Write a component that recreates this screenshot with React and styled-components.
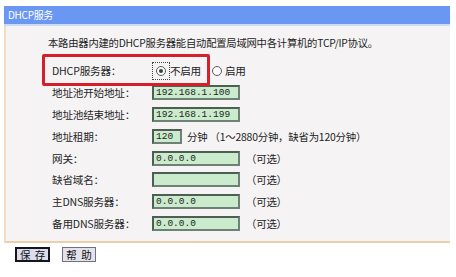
import React from 'react';
import styled, { createGlobalStyle } from 'styled-components';

const GlobalStyle = createGlobalStyle`
  body {
    margin: 0;
    background: #ffffff;
    font-family: "Noto Sans CJK SC", "Liberation Sans", sans-serif;
    color: #1e1e1e;
  }
`;

const rows = [
  { label: '地址池开始地址：', value: '192.168.1.100', width: 88 },
  { label: '地址池结束地址：', value: '192.168.1.199', width: 88 },
  { label: '地址租期：', value: '120', width: 30, note: '分钟 （1～2880分钟，缺省为120分钟）' },
  { label: '网关：', value: '0.0.0.0', width: 88, note: '（可选）', gap: 6 },
  { label: '缺省域名：', value: '', width: 88, note: '（可选）', gap: 6 },
  { label: '主DNS服务器：', value: '0.0.0.0', width: 88, note: '（可选）', gap: 6 },
  { label: '备用DNS服务器：', value: '0.0.0.0', width: 88, note: '（可选）', gap: 6 },
];

function App() {
  return (
    <>
      <GlobalStyle />
      <Page>
        <Panel>
          <Header>DHCP服务</Header>
          <Body>
            <Intro>本路由器内建的DHCP服务器能自动配置局域网中各计算机的TCP/IP协议。</Intro>
            <Form>
              <Highlight />
              <Label>DHCP服务器：</Label>
              <Field>
                <Focus>
                  <Radio checked />
                </Focus>
                <RadioText>不启用</RadioText>
                <Radio />
                <RadioText>启用</RadioText>
              </Field>
              {rows.map((r) => (
                <React.Fragment key={r.label}>
                  <Label>{r.label}</Label>
                  <Field>
                    <Input w={r.width}>{r.value}</Input>
                    {r.note && <Note gap={r.gap}>{r.note}</Note>}
                  </Field>
                </React.Fragment>
              ))}
            </Form>
          </Body>
          <Buttons>
            <Button primary>保 存</Button>
            <Button>帮 助</Button>
          </Buttons>
        </Panel>
      </Page>
    </>
  );
}

export default App;

const Page = styled.div`
  width: 456px;
  height: 277px;
  overflow: hidden;
  padding-top: 6px;
  box-sizing: border-box;
`;

const Panel = styled.div`
  margin-left: 4px;
  width: 446px;
`;

const Header = styled.div`
  height: 18px;
  background: #6a97f2;
  border-bottom: 2px solid #cddcf2;
  color: #ffffff;
  font-size: 10px;
  line-height: 18px;
  padding-left: 4px;
  letter-spacing: -0.3px;
`;

const Body = styled.div`
  box-sizing: border-box;
  height: 217px;
  background: #f5f3f4;
  border-left: 2px solid #f6dcc4;
  border-bottom: 2px solid #efcfa8;
  padding-top: 10px;
`;

const Intro = styled.div`
  font-size: 10.3px;
  line-height: 14px;
  padding-left: 42px;
  letter-spacing: -0.2px;
  white-space: nowrap;
`;

const Form = styled.div`
  position: relative;
  margin-top: 10px;
  display: grid;
  grid-template-columns: 100px 1fr;
  grid-auto-rows: 21.8px;
  padding-left: 46px;
`;

const Highlight = styled.div`
  position: absolute;
  left: 36px;
  top: -6px;
  width: 162px;
  height: 26px;
  border: 3px solid #d3202b;
  border-radius: 2px;
  pointer-events: none;
`;

const Label = styled.div`
  display: flex;
  align-items: center;
  font-size: 10.6px;
  white-space: nowrap;
  letter-spacing: -0.2px;
  color: #262626;
`;

const Field = styled.div`
  display: flex;
  align-items: center;
  font-size: 10.6px;
  white-space: nowrap;
`;

const Focus = styled.span`
  display: flex;
  align-items: center;
  justify-content: center;
  width: 16px;
  height: 16px;
  border: 1px dotted #444;
`;

const Radio = styled.span`
  position: relative;
  width: 10px;
  height: 10px;
  border-radius: 50%;
  border: 1px solid #5a5a5a;
  background: #fbfbfb;
  box-sizing: border-box;
  margin-right: ${(p) => (p.checked ? '0' : '3px')};
  margin-left: ${(p) => (p.checked ? '0' : '11px')};
  &::after {
    content: '';
    display: ${(p) => (p.checked ? 'block' : 'none')};
    position: absolute;
    left: 2px;
    top: 2px;
    width: 4px;
    height: 4px;
    border-radius: 50%;
    background: #2c4a30;
  }
`;

const RadioText = styled.span`
  font-size: 10.6px;
  color: #222;
  letter-spacing: -0.3px;
`;

const Input = styled.div`
  width: ${(p) => p.w}px;
  height: 15px;
  box-sizing: border-box;
  background: #caebcc;
  border-top: 2px solid #4d5f55;
  border-left: 2px solid #4d5f55;
  border-right: 2px solid #6f8076;
  border-bottom: 2px solid #6f8076;
  font-family: "Liberation Mono", monospace;
  font-size: 9.5px;
  line-height: 11px;
  padding-left: 2px;
  color: #1e1e1e;
`;

const Note = styled.span`
  margin-left: ${(p) => p.gap || 5}px;
  font-size: 10.4px;
  color: #222;
  letter-spacing: -0.2px;
`;

const Buttons = styled.div`
  display: flex;
  gap: 12px;
  padding: 4px 0 0 11px;
`;

const Button = styled.div`
  height: 15px;
  padding: 0 2px 0 3px;
  box-sizing: border-box;
  display: flex;
  align-items: center;
  font-size: 10.5px;
  letter-spacing: 1px;
  white-space: pre;
  color: #111;
  background: ${(p) => (p.primary ? '#dcdcec' : '#e3e3ec')};
  border: ${(p) => (p.primary ? '2px solid #15151f' : '1px solid #707080')};
`;
